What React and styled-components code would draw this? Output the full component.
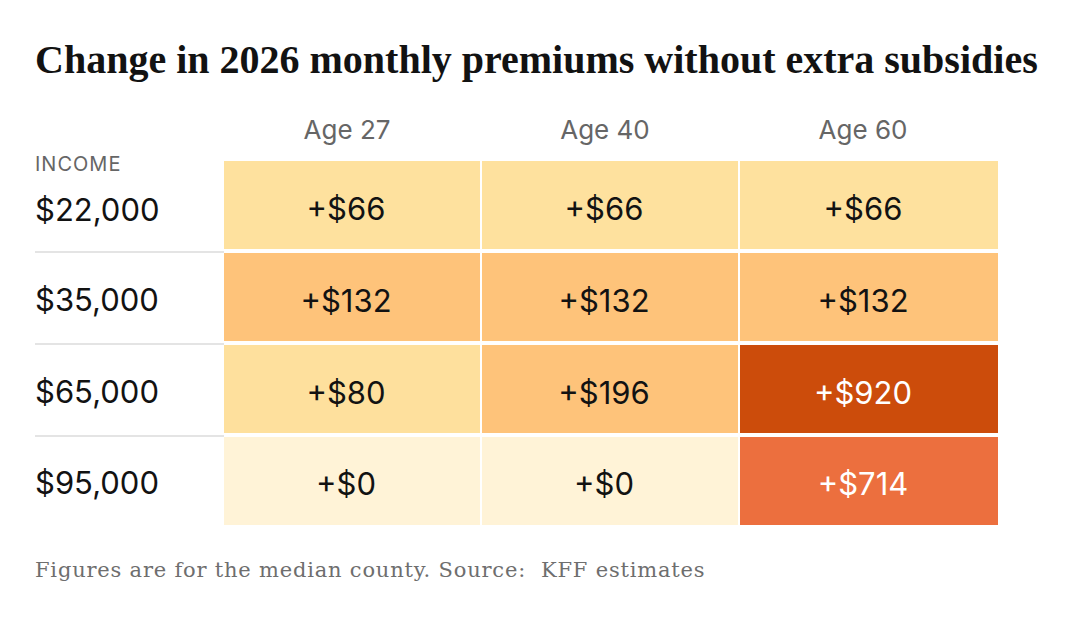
import React from "react";
import styled, { createGlobalStyle } from "styled-components";

const Global = createGlobalStyle`
  html, body { margin: 0; padding: 0; background: #fff; }
  body { width: 1090px; height: 626px; overflow: hidden; }
`;

const Page = styled.div`
  padding: 36px 0 0 35px;
  box-sizing: border-box;
  width: 1090px;
`;

const Title = styled.h1`
  margin: 0;
  font-family: "Liberation Serif", "DejaVu Serif", serif;
  font-weight: 700;
  font-size: 40px;
  line-height: 48px;
  color: #121212;
  letter-spacing: 0;
  white-space: nowrap;
`;

const Grid = styled.div`
  display: grid;
  grid-template-columns: 189px repeat(3, 1fr);
  width: 963px;
  margin-top: 24px;
  font-family: Inter, "Liberation Sans", Arial, sans-serif;
`;

const HeadLabel = styled.div`
  height: 53px;
  display: flex;
  align-items: flex-end;
`;

const Income = styled.span`
  font-size: 20px;
  line-height: 20px;
  letter-spacing: 1px;
  color: #666;
  margin-bottom: -13px;
`;

const AgeHead = styled.div`
  height: 53px;
  display: flex;
  align-items: flex-start;
  justify-content: center;
  font-size: 26px;
  line-height: 30px;
  padding: 7px 12px 0 0;
  box-sizing: border-box;
  color: #666;
`;

const RowLabel = styled.div`
  display: flex;
  align-items: center;
  font-size: 31px;
  color: #121212;
  border-bottom: ${(p) => (p.$last ? "0" : "2px solid #e4e4e4")};
  padding-top: ${(p) => (p.$first ? "6px" : "2px")};
  height: ${(p) => (p.$first ? "84px" : p.$last ? "86px" : "88px")};
`;

const Cell = styled.div`
  height: ${(p) => (p.$last ? "88px" : "90px")};
  padding: 4px 12px 0 0;
  box-sizing: border-box;
  display: flex;
  align-items: center;
  justify-content: center;
  background: ${(p) => p.$bg};
  color: ${(p) => (p.$light ? "#fff" : "#121212")};
  font-size: 31px;
  box-shadow: ${(p) => (p.$last ? "none" : "inset 0 -2px 0 #fff")};
  border-right: ${(p) => (p.$lastCol ? "0" : "2px solid #fff")};
`;

const Note = styled.p`
  margin: 30px 0 0;
  font-family: "DejaVu Serif", "Liberation Serif", serif;
  font-size: 21px;
  line-height: 30px;
  letter-spacing: 0.8px;
  color: #6e6e6e;
`;

const rows = [
  { label: "$22,000", cells: [["+$66", "#fee19e"], ["+$66", "#fee19e"], ["+$66", "#fee19e"]] },
  { label: "$35,000", cells: [["+$132", "#fec37a"], ["+$132", "#fec37a"], ["+$132", "#fec37a"]] },
  { label: "$65,000", cells: [["+$80", "#fee09d"], ["+$196", "#fec37a"], ["+$920", "#cc4c0b", true]] },
  { label: "$95,000", cells: [["+$0", "#fff3d7"], ["+$0", "#fff3d7"], ["+$714", "#ec6f3e", true]] },
];

export default function App() {
  return (
    <>
      <Global />
      <Page>
        <Title>Change in 2026 monthly premiums without extra subsidies</Title>
        <Grid>
          <HeadLabel>
            <Income>INCOME</Income>
          </HeadLabel>
          <AgeHead>Age 27</AgeHead>
          <AgeHead>Age 40</AgeHead>
          <AgeHead>Age 60</AgeHead>
          {rows.map((r, i) => (
            <React.Fragment key={r.label}>
              <RowLabel $first={i === 0} $last={i === rows.length - 1}>{r.label}</RowLabel>
              {r.cells.map(([v, bg, light], j) => (
                <Cell key={j} $bg={bg} $light={light} $last={i === rows.length - 1} $lastCol={j === 2}>
                  {v}
                </Cell>
              ))}
            </React.Fragment>
          ))}
        </Grid>
        <Note>Figures are for the median county. Source:&nbsp; KFF estimates</Note>
      </Page>
    </>
  );
}
